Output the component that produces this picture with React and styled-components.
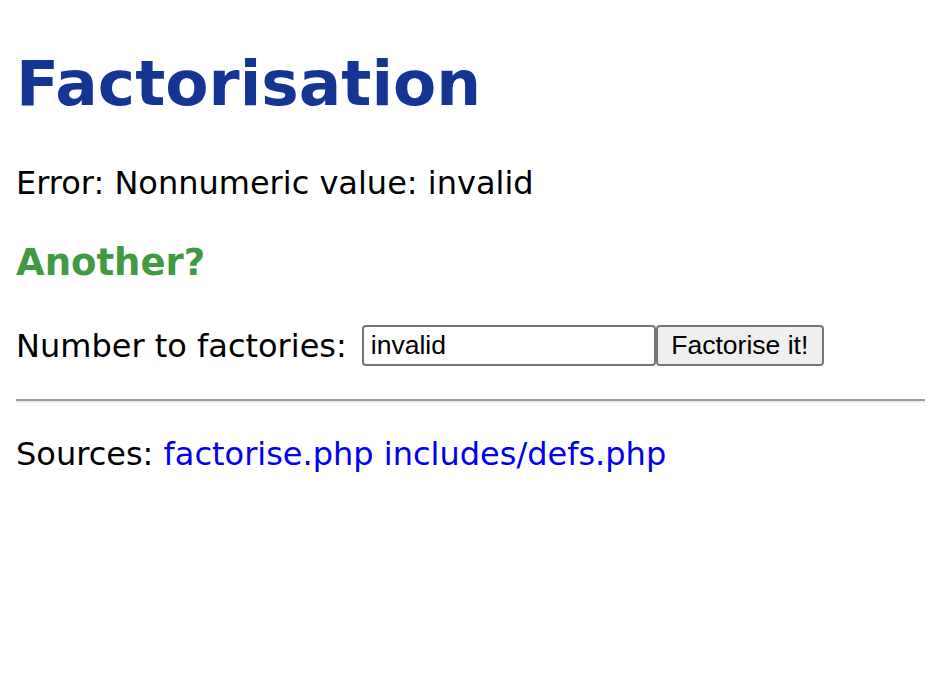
import React from "react";
import styled, { createGlobalStyle } from "styled-components";

const Global = createGlobalStyle`
  body {
    margin: 0;
    padding: 0 13px 0 16px;
    background: #fff;
    font-family: "DejaVu Sans", Verdana, sans-serif;
    font-size: 32px;
    color: #000;
  }
`;

const Title = styled.h1`
  font-size: 63px;
  font-weight: bold;
  color: #143594;
  margin: 46px 0 42px;
  line-height: 1.2;
`;

const Para = styled.p`
  margin: 0 0 39px;
  line-height: 1.2;
`;

const Sub = styled.h2`
  font-size: 37px;
  font-weight: bold;
  color: #3f9a42;
  margin: 0 0 40px;
  line-height: 1.2;
`;

const Form = styled.form`
  display: flex;
  align-items: center;
  margin: 0;
`;

const Label = styled.label`
  margin-right: 15px;
  line-height: 1.2;
`;

const Input = styled.input`
  width: 294px;
  height: 41px;
  box-sizing: border-box;
  font-family: "Liberation Sans", Arial, sans-serif;
  font-size: 26.5px;
  padding: 0 7px;
  border: 2px solid #767676;
  border-radius: 4px;
  color: #000;
`;

const Button = styled.button`
  height: 41px;
  width: 168px;
  box-sizing: border-box;
  font-family: "Liberation Sans", Arial, sans-serif;
  font-size: 26.5px;
  color: #000;
  background: #efefef;
  border: 2px solid #767676;
  border-radius: 4px;
  margin-left: 0;
  padding: 0;
`;

const Rule = styled.hr`
  border: none;
  border-top: 2px solid #9a9a9a;
  border-bottom: 2px solid #eeeeee;
  margin: 33px 0 32px;
`;

const Link = styled.a`
  color: #0000ee;
  text-decoration: none;
`;

export default function App() {
  return (
    <>
      <Global />
      <Title>Factorisation</Title>
      <Para>Error: Nonnumeric value: invalid</Para>
      <Sub>Another?</Sub>
      <Form onSubmit={(e) => e.preventDefault()}>
        <Label>Number to factories:</Label>
        <Input defaultValue="invalid" />
        <Button type="submit">Factorise it!</Button>
      </Form>
      <Rule />
      <Para>
        Sources: <Link href="#">factorise.php</Link>{" "}
        <Link href="#">includes/defs.php</Link>
      </Para>
    </>
  );
}
